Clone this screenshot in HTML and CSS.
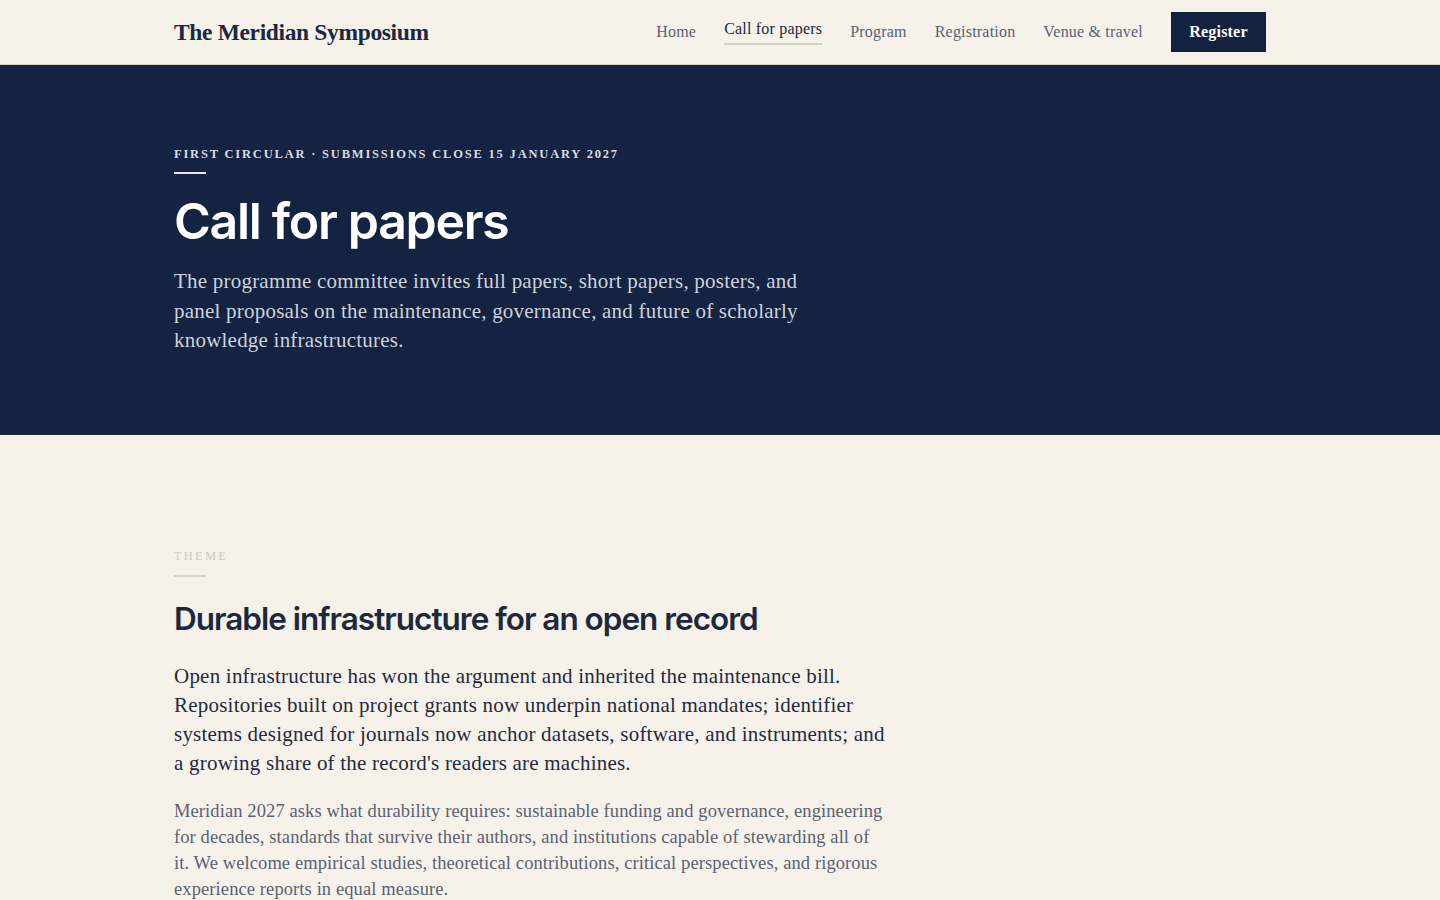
FILE: index.html
```html
<!DOCTYPE html>
<html lang="en">
<head>
<meta charset="utf-8">
<title>Call for papers — The Meridian Symposium</title>
<link rel="stylesheet" href="styles.css">
</head>
<body>
<header class="site-header">
  <div class="container header-inner">
    <a class="logo" href="#">The Meridian Symposium</a>
    <nav class="nav">
      <a class="nav-link" href="#">Home</a>
      <a class="nav-link is-active" href="#">Call for papers</a>
      <a class="nav-link" href="#">Program</a>
      <a class="nav-link" href="#">Registration</a>
      <a class="nav-link" href="#">Venue &amp; travel</a>
      <a class="btn-register" href="#">Register</a>
    </nav>
  </div>
</header>
<main>
  <section class="hero">
    <div class="container">
      <p class="eyebrow eyebrow-light">First circular · Submissions close 15 January 2027</p>
      <h1 class="hero-title">Call for papers</h1>
      <p class="hero-lead">The programme committee invites full papers, short papers, posters, and panel proposals on the maintenance, governance, and future of scholarly knowledge infrastructures.</p>
    </div>
  </section>
  <section class="theme">
    <div class="container">
      <p class="eyebrow eyebrow-muted">Theme</p>
      <h2 class="section-title">Durable infrastructure for an open record</h2>
      <p class="lead">Open infrastructure has won the argument and inherited the maintenance bill. Repositories built on project grants now underpin national mandates; identifier systems designed for journals now anchor datasets, software, and instruments; and a growing share of the record's readers are machines.</p>
      <p class="body">Meridian 2027 asks what durability requires: sustainable funding and governance, engineering for decades, standards that survive their authors, and institutions capable of stewarding all of it. We welcome empirical studies, theoretical contributions, critical perspectives, and rigorous experience reports in equal measure.</p>
    </div>
  </section>
</main>
</body>
</html>
```
FILE: styles.css
```css
* { box-sizing: border-box; }
html, body { margin: 0; padding: 0; }
body {
  background: #f6f2ea;
  color: #1b2840;
  font-family: "Liberation Serif", "DejaVu Serif", serif;
}
a { text-decoration: none; color: inherit; }
.container {
  width: 1092px;
  margin: 0 auto;
}
.site-header {
  background: #f6f2ea;
  border-bottom: 1px solid #d9d4cb;
}
.header-inner {
  height: 64px;
  display: flex;
  align-items: center;
  justify-content: space-between;
}
.logo {
  font-family: "Liberation Serif", serif;
  font-weight: 700;
  font-size: 23.5px;
  letter-spacing: -0.35px;
  color: #1b2840;
}
.nav {
  display: flex;
  align-items: center;
  gap: 28px;
}
.nav-link {
  font-size: 16px;
  letter-spacing: 0.2px;
  color: #5a6070;
  padding: 4px 0;
}
.nav-link.is-active {
  color: #1b2840;
  border-bottom: 2px solid #d6d0c6;
  margin-top: -4px;
  padding-bottom: 5px;
}
.btn-register {
  background: #13223f;
  color: #ffffff;
  font-weight: 700;
  font-size: 16px;
  letter-spacing: 0.2px;
  height: 40px;
  width: 95px;
  display: flex;
  align-items: center;
  justify-content: center;
}
.hero {
  background: #132341;
  padding: 82px 0 79px;
}
.eyebrow {
  margin: 0;
  font-size: 12.5px;
  font-weight: 700;
  text-transform: uppercase;
  letter-spacing: 1.8px;
}
.eyebrow::after {
  content: "";
  display: block;
  width: 32px;
  height: 2px;
  margin-top: 10px;
}
.eyebrow-light { color: #d9dce4; }
.eyebrow-light::after { background: #e6e8ee; }
.eyebrow-muted { color: #cfc9c0; font-weight: 400; letter-spacing: 2.2px; }
.eyebrow-muted::after { background: #d9d3c9; margin-top: 11px; }
.hero-title {
  margin: 17px 0 0;
  font-family: Inter, "Noto Sans", sans-serif;
  font-weight: 600;
  font-size: 50px;
  line-height: 60px;
  letter-spacing: -1.3px;
  color: #ffffff;
}
.hero-lead {
  margin: 16px 0 0;
  max-width: 640px;
  font-size: 21px;
  letter-spacing: 0.22px;
  line-height: 29.5px;
  color: #cdd2dc;
}
.theme {
  padding: 114px 0 40px;
}
.section-title {
  margin: 21px 0 0;
  font-family: Inter, "Noto Sans", sans-serif;
  font-weight: 600;
  font-size: 31.5px;
  line-height: 42px;
  letter-spacing: -1px;
  color: #1b2840;
}
.lead {
  margin: 22px 0 0;
  max-width: 724px;
  font-size: 21px;
  letter-spacing: 0.22px;
  line-height: 29.3px;
  color: #1f2a40;
}
.body {
  margin: 19px 0 0;
  max-width: 712px;
  font-size: 18.5px;
  letter-spacing: 0.1px;
  line-height: 26px;
  color: #5b6172;
}
```
